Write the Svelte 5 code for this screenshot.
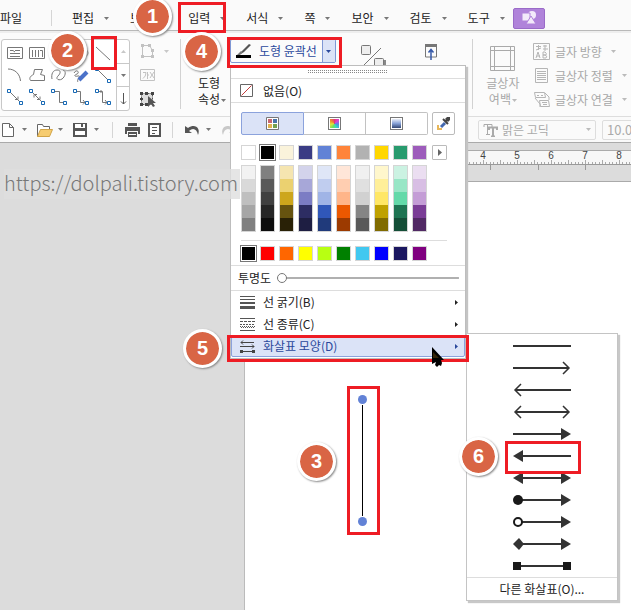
<script lang="ts">
    type Shade = { base: string; tones: string[] };

    const menus = ['편집', '보기', '입력', '서식', '쪽', '보안', '검토', '도구'];

    const themeColors: Shade[] = [
        { base: '#ffffff', tones: ['#f2f2f2', '#d9d9d9', '#bfbfbf', '#a6a6a6', '#808080'] },
        { base: '#000000', tones: ['#808080', '#595959', '#404040', '#262626', '#0d0d0d'] },
        { base: '#faf3db', tones: ['#f5e5b0', '#ebd170', '#cda61c', '#66530f', '#292106'] },
        { base: '#3a3c84', tones: ['#d3d3eb', '#a7a7d8', '#7b7cc4', '#2d2d63', '#1e1e42'] },
        { base: '#6182d6', tones: ['#dfe6f7', '#c0cdef', '#a0b4e6', '#3057b9', '#203a7b'] },
        { base: '#ff843a', tones: ['#ffe6d8', '#ffceb1', '#ffb589', '#eb5800', '#9c3a00'] },
        { base: '#b2b2b2', tones: ['#f0f0f0', '#e0e0e0', '#d1d1d1', '#858585', '#595959'] },
        { base: '#ffd700', tones: ['#fff7cc', '#ffef99', '#ffe766', '#bfa100', '#806b00'] },
        { base: '#289b6e', tones: ['#cbf2e2', '#98e6c6', '#64d9a9', '#1e7452', '#144e37'] },
        { base: '#9d5cbb', tones: ['#ebdef1', '#d8bee4', '#c49dd6', '#7a3d96', '#512964'] }
    ];

    const standardColors = [
        '#000000', '#ff0000', '#ff6600', '#ffff00', '#b8ff12',
        '#008000', '#42c8f0', '#0000ff', '#1b1760', '#800080'
    ];

    // left and right ends of each arrow preset
    const arrows = [
        ['none', 'none'],
        ['none', 'open'],
        ['open', 'none'],
        ['open', 'open'],
        ['none', 'solid'],
        ['solid', 'none'],
        ['solid', 'solid'],
        ['dot', 'solid'],
        ['ring', 'solid'],
        ['diamond', 'solid'],
        ['square', 'square']
    ];

    const textBoxItems = ['글자 방향', '글상자 정렬', '글상자 연결'];
    const shapes = ['bars', 'vbars', 'rect', 'oval', 'line', 'arc', 'poly', 'curve', 'pen', 'conn', 'c1', 'c2', 'c3', 'c4', 'c5'];

    const ticks = Array.from({ length: 130 }, (_, i) => i);
    const numbers = Array.from({ length: 8 }, (_, i) => i + 1);

    let selectedTheme = $state(1);
    let selectedStandard = $state(0);
    let tab = $state(0);
    let opacity = $state(0);
</script>

{#snippet caret()}
    <svg class="caret" width="5" height="3" viewBox="0 0 5 3"><path d="M0 0h5L2.500 3z" fill="currentColor" /></svg>
{/snippet}

{#snippet shapeIcon(kind: string)}
    <svg width="18" height="18" viewBox="0 0 18 18" fill="none" stroke="#777" stroke-width="1">
        {#if kind === 'bars'}
            <path d="M1.500 3.500h15v11h-15zM4 6.500h3M9 6.500h5M4 9.500h10M4 12.500h10M7 6.500l2 1.500" />
        {:else if kind === 'vbars'}
            <path d="M1.500 3.500h15v11h-15zM4.500 6v7M7.500 6v7M10.500 6v7M12 6.500h2.500V13" />
        {:else if kind === 'rect'}
            <path d="M2.500 4.500h13v9h-13z" />
        {:else if kind === 'oval'}
            <ellipse cx="9" cy="9" rx="7" ry="5" />
        {:else if kind === 'line'}
            <path d="M2 3l14 13" />
        {:else if kind === 'arc'}
            <path d="M2 3C9 3 14 8 14.500 15" />
        {:else if kind === 'poly'}
            <path d="M6.500 3.500h8l-2 5 4 1v5h-14c-2-3 1-5 3-6z" />
        {:else if kind === 'curve'}
            <path d="M2 13c-1-5 1-9 5-9s4 3 1 6 1 5 4 3 5-8 1-9" />
        {:else if kind === 'pen'}
            <path d="M2 7c3-5 6 0 3 1s-3 3 1 2-2 4 0 6" />
            <path d="M7 14l8-8" stroke="#4b72c9" stroke-width="4" />
        {:else}
            {#if kind === 'conn'}
                <path d="M4 4l10 10" />
            {:else if kind === 'c1'}
                <path d="M4 4l10 10M9 11.500h3v-3" />
            {:else if kind === 'c2'}
                <path d="M4 4l10 10M9 11.500h3v-3M9 6.500H6v3" />
            {:else if kind === 'c3'}
                <path d="M5 3.500h4.500v11H13" />
            {:else if kind === 'c4'}
                <path d="M5 3.500h3.500v11H13M11 12l2 2.500-2 2" />
            {:else}
                <path d="M5 3.500h3.500v11H13M11 12l2 2.500-2 2M7 2v3" />
            {/if}
            <path d="M1.500 1.500h3v3h-3zM13.500 13.500h3v3h-3z" fill="#fff" stroke="#1769b5" />
        {/if}
    </svg>
{/snippet}

{#snippet arrowEnd(kind: string)}
    {#if kind === 'open'}
        <path d="M8 2L2 8l6 6" fill="none" stroke="#333" stroke-width="1.500" />
    {:else if kind === 'solid'}
        <path d="M0 8l10-6v12z" fill="#333" />
    {:else if kind === 'dot'}
        <circle cx="5" cy="8" r="5" fill="#191919" />
    {:else if kind === 'ring'}
        <circle cx="5" cy="8" r="4" fill="#fff" stroke="#191919" stroke-width="2" />
    {:else if kind === 'diamond'}
        <path d="M0 8l6-6 5 6-5 6z" fill="#333" />
    {:else if kind === 'square'}
        <path d="M0 4h8v8H0z" fill="#191919" />
    {/if}
{/snippet}

<div class="app">
    <nav class="menubar">
        <button type="button" class="file">파일</button>
        {#each menus as menu}
            <button type="button" class="menu">{menu}{@render caret()}</button>
        {/each}
        <button type="button" class="shape-tab" aria-label="도형">
            <svg width="16" height="16" viewBox="0 0 16 16" fill="#f3eafa">
                <circle cx="11" cy="5" r="4" />
                <path d="M1 3h8v8H1z" stroke="#b083da" />
                <path d="M10 6l5 8H5z" stroke="#b083da" />
            </svg>
        </button>
    </nav>

    <div class="ribbon">
        <div class="gallery">
            <div class="shapes">
                {#each shapes as shape}
                    <button type="button" aria-label={shape}>{@render shapeIcon(shape)}</button>
                {/each}
            </div>
            <div class="scroll">
                <button type="button" class="dim" aria-label="위로">
                    <svg width="5" height="3" viewBox="0 0 5 3"><path d="M0 3h5L2.500 0z" fill="currentColor" /></svg>
                </button>
                <button type="button" aria-label="아래로">{@render caret()}</button>
                <button type="button" aria-label="더 보기">
                    <svg width="7" height="12" viewBox="0 0 7 12" fill="none" stroke="#555"><path d="M3.500 0v11M1 8.500L3.500 11 6 8.500" /></svg>
                </button>
            </div>
        </div>

        <div class="tools">
            <button type="button" class="dim" aria-label="점 편집">
                <svg width="17" height="16" viewBox="0 0 17 16" fill="none" stroke="#c2c2c2">
                    <path d="M3.500 2.500h7l3 5v6h-10z" />
                    <path d="M2 1h3v3H2zM9 1h3v3H9zM12 6h3v3h-3zM2 12h3v3H2zM12 12h3v3h-3z" fill="#c2c2c2" stroke="none" />
                </svg>
                {@render caret()}
            </button>
            <button type="button" class="dim" aria-label="글자 넣기">
                <svg width="17" height="16" viewBox="0 0 17 16" fill="none" stroke="#c2c2c2">
                    <path d="M1.500 2.500h14v11h-14zM4 5.500h3q0 4-3 6M8.500 5v7M8.500 8H10M11 5l4 6M15 5l-4 6" />
                </svg>
            </button>
            <button type="button" aria-label="개체 선택">
                <svg width="17" height="16" viewBox="0 0 17 16">
                    <path d="M2.500 2.500h11v11h-11z" fill="#ddd" stroke="#555" stroke-dasharray="2 1" />
                    <path d="M1 1h3v3H1zM6 1h3v3H6zM12 1h3v3h-3zM1 12h3v3H1zM6 12h3v3H6zM1 7h3v2H1z" fill="#444" />
                    <path d="M9 5v11l3-3 2 3 2-1-2-3h3z" fill="#555" />
                </svg>
            </button>
        </div>

        <span class="separator"></span>
        <button type="button" class="props">도형<br />속성{@render caret()}</button>

        <div class="split">
            <button type="button" class="outline">
                <svg width="17" height="16" viewBox="0 0 17 16">
                    <path d="M14 1l2 1-7 7-3 2 1-3z" fill="#555" />
                    <path d="M6 8l2 1-3 3H2z" fill="#777" />
                    <path d="M1 12h15v3H1z" fill="#000" />
                </svg>
                도형 윤곽선
            </button>
            <button type="button" class="drop" aria-label="도형 윤곽선 목록">{@render caret()}</button>
        </div>

        <svg class="toggle" width="26" height="24" viewBox="0 0 26 24" fill="#eee" stroke="#777">
            <path d="M15 15h10v8H15z" fill="#888" stroke="none" />
            <rect x="0.500" y="0.500" width="9" height="9" rx="1" />
            <path d="M20 3L2 21" />
            <rect x="13.500" y="13.500" width="9" height="9" rx="1" />
        </svg>
        <svg class="upward" width="12" height="18" viewBox="0 0 12 18" fill="none" stroke="#777">
            <path d="M0.500 2v11h11V2" />
            <path d="M0 1.500h12" stroke-width="3" />
            <path d="M6 16V6M3.500 8.500L6 5.500l2.500 3" stroke="#3659a8" stroke-width="1.500" />
        </svg>

        <span class="separator far"></span>
        <button type="button" class="margin-button">
            <svg width="25" height="25" viewBox="0 0 25 25" fill="none" stroke="#aaa">
                <path d="M0.500 0.500h24v24H0.500zM4.500 0v25M20.500 0v25M0 4.500h25M0 20.500h25" />
            </svg>
            <span>글상자<br />여백{@render caret()}</span>
        </button>
        <div class="textbox">
            {#each textBoxItems as item, i}
                <button type="button">
                    <svg width="17" height="17" viewBox="0 0 17 17" fill="none" stroke="#b5b5b5">
                        {#if i === 0}
                            <path d="M0.500 0.500h16v16H0.500zM3 3.500h5M5.500 2v5M3 7l5-2M10 3h4M12 2v6M10 6h5M3 15l2-6 2 6M4 13h3M10 9v6h3q2-2-1-3h-2 3q1-2-1-3z" />
                        {:else if i === 1}
                            <path d="M2.500 1.500h12v14h-12zM4 4.500h9M4 6.500h9M4 8.500h9M4 10.500h9M4 12.500h9" />
                        {:else}
                            <path d="M1.500 1.500h10l1 5h-10zM4 4.500h2M8 4.500h2M6.500 9.500h9l1 6h-9zM2 7l5 6v3M12 2l4 4v3M9 11.500h5M10 13.500h4" />
                        {/if}
                    </svg>
                    {item}{@render caret()}
                </button>
            {/each}
        </div>
    </div>

    <div class="quickbar">
        <div class="quick-icons">
            <button type="button" aria-label="새 문서">
                <svg width="17" height="16" viewBox="0 0 17 16" fill="#fff" stroke="#666"><path d="M2.500 1.500h7l4 4v9h-11zM9.500 1.500v4h4" /></svg>{@render caret()}
            </button>
            <button type="button" aria-label="열기">
                <svg width="17" height="16" viewBox="0 0 17 16" fill="#fff" stroke="#666">
                    <path d="M1.500 14.500v-12h5l1 2h6v3" />
                    <path d="M1.500 14.500l3-7h12l-3 7z" fill="#f6cc70" stroke="#d1a447" />
                </svg>{@render caret()}
            </button>
            <button type="button" aria-label="저장">
                <svg width="17" height="16" viewBox="0 0 17 16"><path d="M1 1h14v14H1z" fill="#555" /><path d="M3 2h10v4H3zM3 9h10v4H3z" fill="#fff" /><path d="M9 2h2v3H9z" fill="#555" /></svg>{@render caret()}
            </button>
            <span class="bar"></span>
            <button type="button" aria-label="인쇄">
                <svg width="17" height="16" viewBox="0 0 17 16" fill="#555"><path d="M4 1h9v3H4zM1 5h15v7h-2V9H3v3H1zM4 10h9v5H4z" /><path d="M5 12h7v1H5z" fill="#fff" /></svg>
            </button>
            <button type="button" aria-label="미리 보기">
                <svg width="17" height="16" viewBox="0 0 17 16"><path d="M2 1h13v14H2z" fill="#555" /><path d="M4 3h9v10H4z" fill="#fff" /><path d="M6 5.500h5M6 8.500h5M6 11.500h3" stroke="#555" /></svg>
            </button>
            <span class="bar"></span>
            <button type="button" aria-label="되돌리기">
                <svg width="17" height="16" viewBox="0 0 17 16"><path d="M1 4v7h7L5 9c4-4 8-2 9 4 3-7-3-12-10-7z" fill="#555" /></svg>{@render caret()}
            </button>
            <button type="button" class="dim" aria-label="다시 실행">
                <svg width="17" height="16" viewBox="0 0 17 16"><path d="M16 4v7H9l3-2C8 5 4 7 3 13 0 6 6 1 13 6z" fill="currentColor" /></svg>
            </button>
        </div>
        <div class="combo font">
            <svg width="15" height="14" viewBox="0 0 15 14" fill="none" stroke="#aaa"><path d="M1 4V1.500h8V4M4.500 2v9M3 11.500h4" /><path d="M6 7V4.500h8V7M10 5v8M8 13.500h4" stroke-width="2" /></svg>
            <select aria-label="글꼴" disabled><option>맑은 고딕</option></select>
            {@render caret()}
        </div>
        <div class="combo size">
            <select aria-label="글자 크기" disabled><option>10.0</option></select>
        </div>
    </div>

    <main class="workspace">
        <div class="ruler">
            <svg width="100%" height="13">
                {#each ticks as t}
                    <line x1={Math.round(103 + t * 3.4) + 0.5} x2={Math.round(103 + t * 3.4) + 0.5} y1={t % 5 === 0 ? 9 : 11} y2="13" stroke="#aaa" />
                {/each}
                {#each numbers as n}
                    <text x={103 + n * 34} y="8" text-anchor="middle">{n}</text>
                {/each}
            </svg>
        </div>
        <div class="tabstops">
            <svg width="100%" height="5">
                {#each [246, 294, 341] as x}
                    <line x1={x + 0.5} x2={x + 0.5} y1="0" y2="5" stroke="#999" />
                {/each}
            </svg>
        </div>
        <div class="page"></div>
    </main>

    <svg class="drawn-line" width="11" height="132" viewBox="0 0 11 132">
        <path d="M5.500 11v111" stroke="#000" />
        <circle cx="5.500" cy="5.500" r="4.500" fill="#6282d6" />
        <circle cx="5.500" cy="127.500" r="4.500" fill="#6282d6" />
    </svg>

    <section class="dropdown">
        <div class="grip">
            <svg width="80" height="3"><path d="M0 0.500h80M0 2.500h80" stroke="#888" stroke-dasharray="1 1" /></svg>
        </div>
        <button type="button" class="no-line">
            <svg width="13" height="13" viewBox="0 0 13 13" fill="#fff" stroke="#666"><path d="M0.500 0.500h12v12H0.500z" /><path d="M1.500 11.500l10-10" stroke="#c23a3a" /></svg>
            없음(O)
        </button>
        <div class="palette">
            <div class="tabs">
                <div class="tab-group">
                    {#each ['팔레트', '스펙트럼', '그러데이션'] as name, i}
                        <button type="button" class:active={tab === i} aria-label={name} onclick={() => (tab = i)}>
                            {#if i === 0}
                                <svg width="13" height="13" viewBox="0 0 13 13">
                                    <path d="M0.500 0.500h12v12H0.500z" fill="#fff" stroke="#777" />
                                    <path d="M2 2h4v4H2z" fill="#c8676f" /><path d="M7 2h4v4H7z" fill="#4874aa" />
                                    <path d="M2 7h4v4H2z" fill="#e2b24c" /><path d="M7 7h4v4H7z" fill="#74a150" />
                                </svg>
                            {:else}
                                <span class={i === 1 ? 'spectrum' : 'gradient'}></span>
                            {/if}
                        </button>
                    {/each}
                </div>
                <button type="button" class="picker" aria-label="색 골라내기">
                    <svg width="15" height="15" viewBox="0 0 15 15">
                        <path d="M2 9v4h4" fill="none" stroke="#e8b75a" stroke-width="2" />
                        <path d="M5 11l4-4" stroke="#4468ae" stroke-width="3" />
                        <path d="M7 3l5 5M9 6l3-3" stroke="#444" stroke-width="2" />
                        <path d="M11 1h3v3l-2 2-3-3z" fill="#444" />
                    </svg>
                </button>
            </div>
            <div class="swatches">
                {#each themeColors as color, i}
                    <button type="button" class="swatch" class:selected={selectedTheme === i} style:background={color.base} aria-label={color.base} onclick={() => (selectedTheme = i)}></button>
                {/each}
                <button type="button" class="more" aria-label="다른 색">
                    <svg width="4" height="7" viewBox="0 0 4 7"><path d="M0 0v7l4-3.500z" fill="#666" /></svg>
                </button>
            </div>
            <div class="shades">
                {#each themeColors as color}
                    <div class="shade">
                        {#each color.tones as tone}
                            <button type="button" style:background={tone} aria-label={tone}></button>
                        {/each}
                    </div>
                {/each}
            </div>
            <div class="swatches standard">
                {#each standardColors as color, i}
                    <button type="button" class="swatch" class:selected={selectedStandard === i} style:background={color} aria-label={color} onclick={() => (selectedStandard = i)}></button>
                {/each}
            </div>
        </div>
        <div class="opacity">
            <label for="opacity">투명도</label>
            <input id="opacity" type="range" min="0" max="100" bind:value={opacity} />
        </div>
        <div class="options">
            <button type="button">
                <svg width="15" height="13" viewBox="0 0 15 13" fill="#555"><path d="M0 0h15v1H0zM0 3h15v1H0zM0 6h15v2H0zM0 10h15v3H0z" /></svg>
                <span>선 굵기(B)</span>
                <svg width="3" height="5" viewBox="0 0 3 5"><path d="M0 0v5l3-2.500z" fill="currentColor" /></svg>
            </button>
            <button type="button">
                <svg width="15" height="13" viewBox="0 0 15 13" stroke="#555"><path d="M0 0.500h15" /><path d="M0 3.500h15" stroke-dasharray="3 1" /><path d="M0 6.500h15" stroke-dasharray="2 1" /><path d="M0 8.500h15" stroke-dasharray="1 1" /><path d="M1 9.500h14" stroke-dasharray="1 1" /><path d="M0 12.500h15" /></svg>
                <span>선 종류(C)</span>
                <svg width="3" height="5" viewBox="0 0 3 5"><path d="M0 0v5l3-2.500z" fill="currentColor" /></svg>
            </button>
            <button type="button" class="active">
                <svg width="15" height="13" viewBox="0 0 15 13" fill="none" stroke="#444"><path d="M1 2.500h13M3 0.500l-2 2 2 2M0 6.500h14M12 4.500l2 2-2 2M1 11.500h13" /><path d="M0 10h3v3H0zM12 10h3v3h-3z" fill="#444" stroke="none" /></svg>
                <span>화살표 모양(D)</span>
                <svg width="3" height="5" viewBox="0 0 3 5"><path d="M0 0v5l3-2.500z" fill="currentColor" /></svg>
            </button>
        </div>
    </section>

    <section class="submenu">
        {#each arrows as [left, right]}
            <button type="button" class="arrow" aria-label="{left} {right}">
                <svg width="58" height="16" viewBox="0 0 58 16">
                    <path d="M{left === 'none' ? 0 : 2} 8h{58 - (left === 'none' ? 0 : 2) - (right === 'none' ? 0 : 2)}" stroke="#333" stroke-width="2" />
                    {@render arrowEnd(left)}
                    <g transform="translate(58 0) scale(-1 1)">{@render arrowEnd(right)}</g>
                </svg>
            </button>
        {/each}
        <button type="button" class="other">다른 화살표(O)...</button>
    </section>

    <div class="watermark">https://dolpali.tistory.com</div>

    <div class="frame frame-1"></div>
    <div class="frame frame-2"></div>
    <div class="frame frame-3"></div>
    <div class="frame frame-4"></div>
    <div class="frame frame-5"></div>
    <div class="frame frame-6"></div>
    {#each [1, 2, 3, 4, 5, 6] as step}
        <span class="badge badge-{step}">{step}</span>
    {/each}

    <svg class="cursor" width="14" height="20" viewBox="0 0 14 20">
        <path d="M0 0v17l4-2-1 3 2 2 2-2 2 1 1-3-1-3h3z" fill="#000" />
        <path d="M1 5l6 6H1z" fill="#342508" />
    </svg>
</div>

<style>
    :global(body) {
        margin: 0;
    }

    .app {
        position: relative;
        display: flex;
        flex-direction: column;
        min-height: 100vh;
        overflow: hidden;
        background: #dcdcdc;
        color: #222;
        font-family: 'Noto Sans CJK KR', sans-serif;
        font-size: 12px;
        line-height: 16px;
    }

    svg {
        display: block;
        flex: none;
    }

    button {
        display: flex;
        align-items: center;
        flex: none;
        padding: 0;
        border: 0;
        background: none;
        color: inherit;
        font: inherit;
        white-space: nowrap;
    }

    .caret {
        color: #777;
    }

    .dim,
    .dim .caret {
        color: #c8c8c8;
    }

    .menubar {
        display: flex;
        align-items: center;
        height: 31px;
        padding-top: 6px;
        box-sizing: border-box;
        background: #fafafa;
        border-bottom: 1px solid #b9b9b9;
    }

    .file {
        width: 52px;
        box-sizing: border-box;
        margin-right: 20px;
        border-right: 1px solid #d5d5d5;
    }

    .menu {
        gap: 10px;
        margin-right: 21px;
    }

    .shape-tab {
        justify-content: center;
        width: 32px;
        height: 21px;
        margin-left: -13px;
        background: #b083da;
        border: 1px solid #9a6bc8;
        border-radius: 2px;
    }

    .ribbon {
        display: flex;
        align-items: flex-start;
        height: 86px;
        padding: 6px 0 0 1px;
        box-sizing: border-box;
        background: #fbfbfb;
        border-top: 2px solid #eee;
        border-bottom: 1px solid #ddd;
    }

    .gallery {
        display: flex;
        flex: none;
        height: 70px;
        border: 1px solid #c8c8c8;
        border-radius: 3px;
        background: #fff;
    }

    .shapes {
        display: grid;
        grid-template-columns: repeat(5, 22px);
        grid-auto-rows: 22px;
        padding: 2px 0 0 4px;
    }

    .scroll {
        width: 12px;
        display: flex;
        flex-direction: column;
        border-left: 1px solid #c8c8c8;
    }

    .scroll button {
        flex: 1;
        justify-content: center;
    }

    .scroll button + button {
        border-top: 1px solid #c8c8c8;
    }

    .tools {
        display: flex;
        flex-direction: column;
        gap: 8px;
        width: 41px;
        padding: 4px 0 0 9px;
        box-sizing: content-box;
    }

    .tools button {
        gap: 8px;
    }

    .separator {
        flex: none;
        width: 1px;
        height: 70px;
        background: #d2d2d2;
    }

    .separator.far {
        margin-left: 35px;
    }

    .props {
        display: block;
        width: 49px;
        padding: 36px 0 0 17px;
        box-sizing: border-box;
        text-align: left;
    }

    .props .caret,
    .margin-button .caret {
        display: inline-block;
        margin-left: 1px;
        vertical-align: middle;
    }

    .split {
        display: flex;
        flex: none;
        height: 24px;
        box-sizing: border-box;
        border: 1px solid #7f97d4;
        border-radius: 2px;
        color: #2a489b;
    }

    .outline {
        gap: 7px;
        padding: 0 5px 0 4px;
    }

    .drop {
        width: 13px;
        justify-content: center;
        background: #dbe3f7;
        border-left: 1px solid #7f97d4;
    }

    .drop .caret {
        color: #2a489b;
    }

    .toggle {
        margin: 6px 0 0 25px;
    }

    .upward {
        margin: 5px 0 0 38px;
    }

    .margin-button {
        flex-direction: column;
        gap: 4px;
        width: 60px;
        padding-top: 7px;
        color: #a8a8a8;
    }

    .textbox {
        display: flex;
        flex-direction: column;
        gap: 7px;
        padding-top: 4px;
        color: #a8a8a8;
    }

    .textbox button {
        gap: 5px;
    }

    .textbox .caret {
        margin-left: 4px;
    }

    .margin-button .caret,
    .textbox .caret,
    .combo .caret {
        color: #bbb;
    }

    .quickbar {
        display: flex;
        align-items: center;
        height: 26px;
        box-sizing: border-box;
        background: #fafafa;
        border-bottom: 1px solid #aaa;
    }

    .quick-icons {
        display: flex;
        flex: none;
        align-items: center;
        width: 478px;
    }

    .quick-icons button {
        gap: 5px;
        margin-right: 5px;
    }

    .quick-icons button:has(.caret) {
        margin-right: 9px;
    }

    .bar {
        width: 1px;
        height: 16px;
        margin: 0 11px 0 4px;
        background: #d5d5d5;
    }

    .combo {
        display: flex;
        align-items: center;
        flex: none;
        height: 20px;
        padding: 0 4px;
        box-sizing: border-box;
        border: 1px solid #ddd;
        border-radius: 2px;
    }

    .combo select {
        flex: 1;
        appearance: none;
        padding: 0 4px;
        border: 0;
        background: none;
        color: #aaa;
        opacity: 1;
        font: inherit;
    }

    .font {
        width: 118px;
        margin-right: 6px;
    }

    .size {
        width: 60px;
        padding: 0;
        font-size: 13px;
    }

    .workspace {
        flex: 1;
        display: flex;
        flex-direction: column;
        padding: 7px 0 0 244px;
    }

    .ruler {
        height: 13px;
        background: #f7f7f7;
        border-top: 1px solid #aaa;
        border-bottom: 1px solid #999;
    }

    .ruler text {
        font-family: 'Liberation Sans', sans-serif;
        font-size: 10px;
        fill: #444;
    }

    .tabstops {
        height: 16px;
        border-bottom: 1px solid #aaa;
    }

    .page {
        flex: 1;
        background: #fff;
        border-left: 1px solid #bbb;
    }

    .drawn-line {
        position: absolute;
        left: 357px;
        top: 394px;
    }

    .dropdown {
        position: absolute;
        left: 230px;
        top: 65px;
        width: 234px;
        background: #fff;
        border: 1px solid #bdbdbd;
        box-shadow: 2px 2px 1px #c4c4c4;
    }

    .grip {
        display: flex;
        justify-content: center;
        height: 8px;
        padding-top: 4px;
        border-bottom: 1px solid #ddd;
    }

    .no-line {
        gap: 10px;
        width: 100%;
        height: 24px;
        padding-left: 9px;
        border-bottom: 1px solid #ddd;
    }

    .palette {
        padding: 9px 8px 4px 10px;
        border-bottom: 1px solid #ddd;
    }

    .tabs {
        display: flex;
        gap: 4px;
    }

    .tab-group {
        display: flex;
        width: 187px;
    }

    .tab-group button {
        flex: 1;
        justify-content: center;
        height: 23px;
        box-sizing: border-box;
        border: 1px solid #c2c2c2;
        border-left-width: 0;
    }

    .tab-group button:last-child {
        border-radius: 0 2px 2px 0;
    }

    .tab-group button.active {
        background: #dbe3f7;
        border: 1px solid #8ba2dc;
        border-radius: 2px 0 0 2px;
    }

    .spectrum,
    .gradient {
        width: 9px;
        height: 9px;
        padding: 1px;
        border: 1px solid #777;
        background-clip: content-box;
    }

    .spectrum {
        background-image: conic-gradient(#e33a78, #d943d9, #4a8de8, #35d7c0, #6de05c, #dfe53c, #f08a2a, #e33a78);
    }

    .gradient {
        background-image: linear-gradient(#fff, #86a0d5, #20325c);
    }

    .picker {
        justify-content: center;
        width: 23px;
        height: 23px;
        border: 1px solid #bbb;
        border-radius: 2px;
        box-sizing: border-box;
    }

    .swatches {
        display: flex;
        gap: 4px;
        margin-top: 10px;
    }

    .swatch,
    .more {
        width: 15px;
        height: 15px;
        box-sizing: border-box;
        border: 1px solid #d5d5d5;
    }

    .swatch.selected {
        border-color: #fff;
        outline: 1px solid #777;
    }

    .more {
        justify-content: center;
        margin-left: 1px;
        border-color: #bbb;
        border-radius: 1px;
    }

    .shades {
        display: flex;
        gap: 4px;
        margin-top: 5px;
    }

    .shade {
        border: 1px solid #d5d5d5;
    }

    .shade button {
        width: 13px;
        height: 13px;
    }

    .standard {
        width: 206px;
        margin-top: 8px;
        padding-top: 5px;
        border-top: 1px solid #ddd;
    }

    .opacity {
        display: flex;
        align-items: center;
        gap: 6px;
        height: 24px;
        padding: 0 6px 0 7px;
        border-bottom: 1px solid #ddd;
    }

    .opacity input {
        flex: 1;
        min-width: 0;
        height: 12px;
        margin: 0;
        appearance: none;
        background: linear-gradient(#b0b0b0, #b0b0b0) center / 100% 2px no-repeat;
    }

    .opacity input::-webkit-slider-thumb {
        appearance: none;
        width: 10px;
        height: 10px;
        box-sizing: border-box;
        border: 1px solid #777;
        border-radius: 50%;
        background: #fff;
    }

    .options {
        padding-bottom: 1px;
    }

    .options button {
        gap: 8px;
        width: 100%;
        height: 22px;
        box-sizing: border-box;
        padding: 0 6px 0 8px;
        border: 1px solid transparent;
    }

    .options span {
        flex: 1;
        text-align: left;
    }

    .options .active {
        background: #dbe3f7;
        border-color: #8ba2dc;
        border-radius: 2px;
        color: #2a489b;
    }

    .submenu {
        position: absolute;
        left: 466px;
        top: 333px;
        width: 150px;
        padding-top: 1px;
        background: #fff;
        border: 1px solid #c4c4c4;
        box-shadow: 2px 2px 1px #c8c8c8;
    }

    .arrow {
        justify-content: center;
        width: 100%;
        height: 22px;
    }

    .other {
        justify-content: center;
        width: 100%;
        height: 23px;
        border-top: 1px solid #ddd;
    }

    .watermark {
        position: absolute;
        left: 4px;
        top: 169px;
        height: 30px;
        padding-right: 2px;
        background: rgba(222, 222, 222, 0.8);
        color: #777;
        font-size: 20px;
        font-weight: 300;
        line-height: 28px;
    }

    .frame {
        position: absolute;
        box-sizing: border-box;
        border: 3px solid #ee1c24;
    }

    .frame-1 {
        left: 178px;
        top: 2px;
        width: 48px;
        height: 31px;
    }

    .frame-2 {
        left: 91px;
        top: 36px;
        width: 26px;
        height: 34px;
    }

    .frame-3 {
        left: 347px;
        top: 386px;
        width: 33px;
        height: 149px;
    }

    .frame-4 {
        left: 227px;
        top: 37px;
        width: 115px;
        height: 31px;
    }

    .frame-5 {
        left: 227px;
        top: 335px;
        width: 242px;
        height: 27px;
    }

    .frame-6 {
        left: 505px;
        top: 441px;
        width: 76px;
        height: 33px;
    }

    .badge {
        position: absolute;
        width: 33px;
        height: 33px;
        border: 3px solid #fff;
        border-radius: 50%;
        background: #d96545;
        background-clip: padding-box;
        box-shadow: 1px 1px 2px #888;
        color: #fff;
        font: bold 20px/33px 'Liberation Sans', sans-serif;
        text-align: center;
    }

    .badge-1 {
        left: 133px;
        top: -3px;
    }

    .badge-2 {
        left: 48px;
        top: 31px;
    }

    .badge-3 {
        left: 297px;
        top: 442px;
    }

    .badge-4 {
        left: 182px;
        top: 32px;
    }

    .badge-5 {
        left: 183px;
        top: 329px;
    }

    .badge-6 {
        left: 459px;
        top: 437px;
    }

    .cursor {
        position: absolute;
        left: 432px;
        top: 347px;
    }
</style>
